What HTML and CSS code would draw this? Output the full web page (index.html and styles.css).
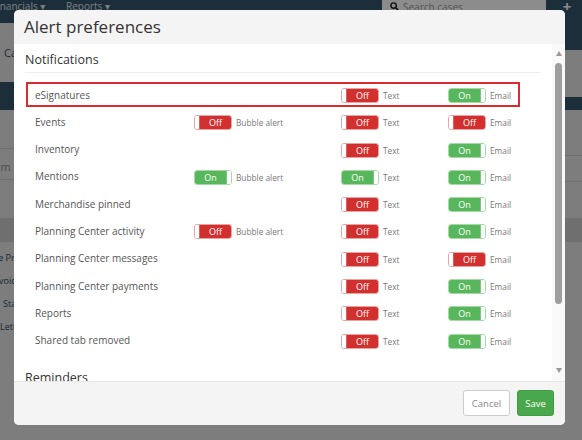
FILE: index.html
```html
<!DOCTYPE html>
<html lang="en">
<head>
  <meta charset="UTF-8">
  <title>Alert preferences</title>
  <link rel="stylesheet" href="styles.css">
</head>
<body>

  <div class="App">
    <header class="Topbar">
      <nav class="TopNav">
        <span class="TopNavItem TopNavItem-cut">Financials &#9662;</span>
        <span class="TopNavItem">Reports &#9662;</span>
      </nav>
      <div class="TopSearch">
        <svg class="TopSearchIcon" width="9" height="9" viewBox="0 0 10 10"><circle cx="4" cy="4" r="3" fill="none" stroke="#222" stroke-width="1.6"/><path d="M6.2 6.2 9.2 9.2" stroke="#222" stroke-width="1.8" stroke-linecap="round"/></svg>
        <span>Search cases</span>
      </div>
      <div class="TopAdd">+</div>
    </header>

    <div class="AppBody">
      <aside class="SideLeft">
        <div class="SideTabs">Ca</div>
        <div class="SideHead"></div>
        <div class="SideGap"></div>
        <div class="SideInput">term</div>
        <div class="SideGap"></div>
        <div class="SideBand"></div>
        <ul class="SideList">
          <li class="SideListPrice">Sale Price</li>
          <li class="SideListInvoice">Invoices</li>
          <li class="SideListStatement">Statements</li>
          <li>Letters</li>
        </ul>
      </aside>
      <main class="AppMain"></main>
      <aside class="SideRight">
        <div class="SideRightTop"></div>
        <div class="SideRightGap"></div>
        <div class="SideRightHead"></div>
        <div class="SideRightSpace"></div>
        <div class="SideRightInput"></div>
        <div class="SideRightSpace2"></div>
        <div class="SideBand"></div>
      </aside>
    </div>
  </div>

  <div class="Backdrop"></div>

  <div class="Modal">
    <div class="ModalHeader">
      <h1 class="ModalTitle">Alert preferences</h1>
    </div>

    <div class="ModalBody">
      <div class="ModalScroll">
        <h2 class="PrefSection">Notifications</h2>

        <div class="PrefRow PrefRow-highlight">
          <span class="PrefName">eSignatures</span>
          <span class="PrefCell"></span>
          <span class="PrefCell"><span class="Switch Switch-off"><i></i><b>Off</b></span>Text</span>
          <span class="PrefCell"><span class="Switch Switch-on"><b>On</b><i></i></span>Email</span>
        </div>
        <div class="PrefRow">
          <span class="PrefName">Events</span>
          <span class="PrefCell"><span class="Switch Switch-off"><i></i><b>Off</b></span>Bubble alert</span>
          <span class="PrefCell"><span class="Switch Switch-off"><i></i><b>Off</b></span>Text</span>
          <span class="PrefCell"><span class="Switch Switch-off"><i></i><b>Off</b></span>Email</span>
        </div>
        <div class="PrefRow">
          <span class="PrefName">Inventory</span>
          <span class="PrefCell"></span>
          <span class="PrefCell"><span class="Switch Switch-off"><i></i><b>Off</b></span>Text</span>
          <span class="PrefCell"><span class="Switch Switch-on"><b>On</b><i></i></span>Email</span>
        </div>
        <div class="PrefRow">
          <span class="PrefName">Mentions</span>
          <span class="PrefCell"><span class="Switch Switch-on"><b>On</b><i></i></span>Bubble alert</span>
          <span class="PrefCell"><span class="Switch Switch-on"><b>On</b><i></i></span>Text</span>
          <span class="PrefCell"><span class="Switch Switch-on"><b>On</b><i></i></span>Email</span>
        </div>
        <div class="PrefRow">
          <span class="PrefName">Merchandise pinned</span>
          <span class="PrefCell"></span>
          <span class="PrefCell"><span class="Switch Switch-off"><i></i><b>Off</b></span>Text</span>
          <span class="PrefCell"><span class="Switch Switch-on"><b>On</b><i></i></span>Email</span>
        </div>
        <div class="PrefRow">
          <span class="PrefName">Planning Center activity</span>
          <span class="PrefCell"><span class="Switch Switch-off"><i></i><b>Off</b></span>Bubble alert</span>
          <span class="PrefCell"><span class="Switch Switch-off"><i></i><b>Off</b></span>Text</span>
          <span class="PrefCell"><span class="Switch Switch-on"><b>On</b><i></i></span>Email</span>
        </div>
        <div class="PrefRow">
          <span class="PrefName">Planning Center messages</span>
          <span class="PrefCell"></span>
          <span class="PrefCell"><span class="Switch Switch-off"><i></i><b>Off</b></span>Text</span>
          <span class="PrefCell"><span class="Switch Switch-off"><i></i><b>Off</b></span>Email</span>
        </div>
        <div class="PrefRow">
          <span class="PrefName">Planning Center payments</span>
          <span class="PrefCell"></span>
          <span class="PrefCell"><span class="Switch Switch-off"><i></i><b>Off</b></span>Text</span>
          <span class="PrefCell"><span class="Switch Switch-on"><b>On</b><i></i></span>Email</span>
        </div>
        <div class="PrefRow">
          <span class="PrefName">Reports</span>
          <span class="PrefCell"></span>
          <span class="PrefCell"><span class="Switch Switch-off"><i></i><b>Off</b></span>Text</span>
          <span class="PrefCell"><span class="Switch Switch-on"><b>On</b><i></i></span>Email</span>
        </div>
        <div class="PrefRow">
          <span class="PrefName">Shared tab removed</span>
          <span class="PrefCell"></span>
          <span class="PrefCell"><span class="Switch Switch-off"><i></i><b>Off</b></span>Text</span>
          <span class="PrefCell"><span class="Switch Switch-on"><b>On</b><i></i></span>Email</span>
        </div>

        <h2 class="PrefSection PrefSection-next">Reminders</h2>
      </div>

      <div class="ScrollBar">
        <span class="ScrollArrow ScrollArrow-up"></span>
        <span class="ScrollThumb"></span>
        <span class="ScrollArrow ScrollArrow-down"></span>
      </div>
    </div>

    <div class="ModalFooter">
      <button class="Btn Btn-cancel">Cancel</button>
      <button class="Btn Btn-save">Save</button>
    </div>
  </div>

</body>
</html>
```

FILE: styles.css
```css
html, body {
  margin: 0;
  padding: 0;
  width: 582px;
  height: 440px;
  overflow: hidden;
  font-family: "Open Sans", "DejaVu Sans", sans-serif;
  background-color: #e4e4e4;
}

/* fundo da aplicacao */
.App {
  height: 440px;
  display: flex;
  flex-direction: column;
}
.Topbar {
  height: 23px;
  display: flex;
  background-color: #33546b;
}
.TopNav {
  flex: 1;
  display: flex;
  overflow: hidden;
}
.TopNavItem {
  color: #dfe6eb;
  font-size: 10px;
  line-height: 12px;
  white-space: nowrap;
}
.TopNavItem-cut {
  margin-left: -8px;
  width: 74px;
}
.TopSearch {
  width: 164px;
  height: 23px;
  box-sizing: border-box;
  background-color: #fff;
  display: flex;
  align-items: flex-start;
  gap: 4px;
  padding: 2px 0 0 8px;
  color: #999;
  font-size: 10px;
  line-height: 10px;
}
.TopAdd {
  width: 36px;
  color: #fff;
  font-size: 15px;
  font-weight: bold;
  line-height: 12px;
  text-align: center;
  padding-left: 6px;
  box-sizing: border-box;
}
.AppBody {
  flex: 1;
  display: flex;
}
.SideLeft {
  width: 14px;
  overflow: hidden;
}
.SideTabs {
  height: 59px;
  box-sizing: border-box;
  padding: 22px 0 0 4px;
  font-size: 11px;
  color: #34495e;
  white-space: nowrap;
}
.SideHead {
  height: 28px;
  background-color: #33546b;
}
.SideGap {
  height: 38px;
}
.SideInput {
  height: 32px;
  box-sizing: border-box;
  border-top: 1px solid #c8c8c8;
  border-bottom: 1px solid #c8c8c8;
  margin-left: -14px;
  padding-top: 10px;
  font-size: 11px;
  color: #888;
  white-space: nowrap;
}
.SideBand {
  height: 24px;
  background-color: #cbcbcb;
}
.SideList {
  list-style: none;
  margin: 4px 0 0 0;
  padding: 0;
}
.SideList li {
  height: 23px;
  line-height: 23px;
  font-size: 9px;
  color: #2c4a63;
  white-space: nowrap;
}
.SideListPrice {
  margin-left: -14px;
}
.SideListInvoice {
  margin-left: -9px;
}
.SideListStatement {
  margin-left: 3px;
}
.AppMain {
  flex: 1;
}
.SideRight {
  width: 36px;
}
.SideRightTop {
  height: 27px;
  background-color: #33546b;
}
.SideRightGap {
  height: 47px;
}
.SideRightHead {
  height: 13px;
  background-color: #33546b;
}
.SideRightSpace {
  height: 45px;
}
.SideRightInput {
  height: 25px;
  border-top: 1px solid #cbcbcb;
  border-bottom: 1px solid #cbcbcb;
}
.SideRightSpace2 {
  height: 36px;
}

.Backdrop {
  position: fixed;
  inset: 0;
  background-color: rgba(0, 0, 0, 0.45);
}

/* janela modal */
.Modal {
  position: absolute;
  left: 14px;
  top: 10px;
  width: 551px;
  height: 415px;
  background-color: #fff;
  border-radius: 5px;
  overflow: hidden;
  display: flex;
  flex-direction: column;
}
.ModalHeader {
  height: 34px;
  flex-shrink: 0;
  background-color: #f4f4f4;
  padding-left: 10px;
  box-sizing: border-box;
}
.ModalTitle {
  margin: 0;
  font-size: 17px;
  font-weight: normal;
  line-height: 34px;
  color: #333;
}
.ModalBody {
  flex: 1;
  display: flex;
  min-height: 0;
}
.ModalScroll {
  flex: 1;
  overflow: hidden;
  padding: 6px 11px 0 11px;
}
.PrefSection {
  margin: 0 0 9px 0;
  font-size: 12.5px;
  font-weight: normal;
  line-height: 20px;
  color: #333;
  padding-bottom: 2px;
  border-bottom: 1px solid #eee;
}
.PrefSection-next {
  margin-top: 15px;
  border-bottom: none;
}
.PrefRow {
  width: 494px;
  height: 25px;
  margin: 0 0 2.3px 1px;
  box-sizing: border-box;
  border: 2px solid transparent;
  padding-left: 7px;
  display: grid;
  grid-template-columns: 159px 147px 107px 1fr;
  align-items: center;
}
.PrefRow-highlight {
  border-color: #dd2a2e;
}
.PrefName {
  font-size: 10px;
  color: #555;
  white-space: nowrap;
}
.PrefCell {
  display: flex;
  align-items: center;
  gap: 4px;
  font-size: 8.3px;
  color: #777;
  margin-top: 2px;
}

.Switch {
  width: 38px;
  height: 15px;
  box-sizing: border-box;
  border: 1px solid;
  border-radius: 3px;
  display: flex;
  overflow: hidden;
}
.Switch i {
  width: 4px;
  background-color: #fff;
}
.Switch b {
  flex: 1;
  font-weight: normal;
  font-size: 9px;
  line-height: 13px;
  text-align: center;
  color: #fff;
}
.Switch-off {
  border-color: #eba4a4;
}
.Switch-off b {
  background-color: #d2302f;
  border-left: 1px solid #d8605f;
}
.Switch-on {
  border-color: #a5d9a5;
}
.Switch-on b {
  background-color: #58b75c;
  border-right: 1px solid #7cc77f;
}

.ScrollBar {
  width: 13px;
  background-color: #f9f9f9;
  display: flex;
  flex-direction: column;
  align-items: center;
  padding: 7px 0 8px 0;
  box-sizing: border-box;
}
.ScrollArrow {
  width: 0;
  height: 0;
  border-left: 3.5px solid transparent;
  border-right: 3.5px solid transparent;
}
.ScrollArrow-up {
  border-bottom: 5px solid #9a9a9a;
}
.ScrollArrow-down {
  border-top: 5px solid #9a9a9a;
  margin-top: auto;
}
.ScrollThumb {
  width: 7px;
  height: 241px;
  margin-top: 7px;
  border-radius: 4px;
  background-color: #9e9e9e;
}

.ModalFooter {
  height: 44px;
  flex-shrink: 0;
  box-sizing: border-box;
  background-color: #f4f4f4;
  border-top: 1px solid #e6e6e6;
  padding: 8px 11px 0 0;
  display: flex;
  justify-content: flex-end;
  align-items: flex-start;
  gap: 7px;
}
.Btn {
  height: 26px;
  padding: 0;
  border-radius: 3px;
  font-family: "Open Sans", "DejaVu Sans", sans-serif;
  font-size: 9.5px;
}
.Btn-cancel {
  width: 47px;
  background-color: #fff;
  border: 1px solid #ccc;
  color: #888;
}
.Btn-save {
  width: 37px;
  background-color: #49a84c;
  border: 1px solid #3f9c42;
  color: #fff;
}
```
